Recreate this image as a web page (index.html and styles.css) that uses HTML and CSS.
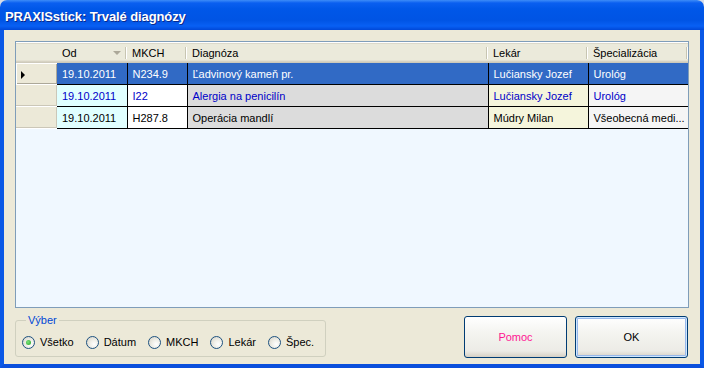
FILE: index.html
```html
<!DOCTYPE html>
<html lang="sk">
<head>
    <meta charset="UTF-8">
    <title>PRAXISstick: Trvalé diagnózy</title>
    <link rel="stylesheet" href="styles.css">
</head>
<body>
    <div class="window">
        <!-- Title bar -->
        <div class="titlebar">
            <span class="title">PRAXISstick: Trvalé diagnózy</span>
        </div>

        <div class="client">
            <!-- Grid with diagnoses -->
            <div class="grid">
                <table class="diag">
                    <colgroup>
                        <col class="w-rowhead">
                        <col class="w-date">
                        <col class="w-code">
                        <col class="w-name">
                        <col class="w-doctor">
                        <col class="w-spec">
                    </colgroup>
                    <thead>
                        <tr>
                            <th class="rowhead"></th>
                            <th>Od<span class="sort"></span></th>
                            <th>MKCH</th>
                            <th>Diagnóza</th>
                            <th>Lekár</th>
                            <th>Špecializácia</th>
                        </tr>
                    </thead>
                    <tbody>
                        <tr class="selected">
                            <td class="rowhead"><span class="current"></span></td>
                            <td class="c-date">19.10.2011</td>
                            <td class="c-code">N234.9</td>
                            <td class="c-name">Ľadvinový kameň pr.</td>
                            <td class="c-doctor">Lučiansky Jozef</td>
                            <td class="c-spec">Urológ</td>
                        </tr>
                        <tr class="allergy">
                            <td class="rowhead"></td>
                            <td class="c-date">19.10.2011</td>
                            <td class="c-code">I22</td>
                            <td class="c-name">Alergia na penicilín</td>
                            <td class="c-doctor">Lučiansky Jozef</td>
                            <td class="c-spec">Urológ</td>
                        </tr>
                        <tr>
                            <td class="rowhead"></td>
                            <td class="c-date">19.10.2011</td>
                            <td class="c-code">H287.8</td>
                            <td class="c-name">Operácia mandlí</td>
                            <td class="c-doctor">Múdry Milan</td>
                            <td class="c-spec">Všeobecná medi...</td>
                        </tr>
                    </tbody>
                </table>
            </div>

            <div class="bottom">
                <!-- Filter selection -->
                <fieldset class="groupbox">
                    <legend>Výber</legend>
                    <label class="option"><span class="radio checked"></span>Všetko</label>
                    <label class="option"><span class="radio"></span>Dátum</label>
                    <label class="option"><span class="radio"></span>MKCH</label>
                    <label class="option"><span class="radio"></span>Lekár</label>
                    <label class="option"><span class="radio"></span>Špec.</label>
                </fieldset>

                <div class="actions">
                    <button class="btn help-btn">Pomoc</button>
                    <button class="btn ok-btn">OK</button>
                </div>
            </div>
        </div>
    </div>
</body>
</html>
```

FILE: styles.css
```css
body {
    margin: 0;
    padding: 0;
    background-color: #d6dce8;
    font-family: "Liberation Sans", Arial, sans-serif;
    font-size: 11px;
}
.window {
    width: 704px;
    height: 368px;
    box-sizing: border-box;
    display: flex;
    flex-direction: column;
    background-color: #ece9d8;
    border-radius: 7px 7px 0 0;
    overflow: hidden;
}
.titlebar {
    flex: none;
    height: 30px;
    box-sizing: border-box;
    padding: 3px 0 0 5px;
    display: flex;
    align-items: center;
    background: linear-gradient(to bottom, #3d8cf8 0, #0a5ff0 3px, #0057e8 9px, #0054e4 20px, #0860f4 26px, #0048d8 30px);
}
.title {
    color: #fff;
    font-weight: bold;
    font-size: 13px;
    letter-spacing: -0.1px;
    text-shadow: 1px 1px #0a2a8c;
}
.client {
    flex: 1;
    display: flex;
    flex-direction: column;
    padding: 11px 11px 0 11px;
    border-left: 4px solid #0a58e6;
    border-right: 4px solid #0a58e6;
    border-bottom: 4px solid #0a4fdc;
}

/* grid */
.grid {
    height: 267px;
    box-sizing: border-box;
    border: 1px solid #7f9db9;
    background-color: #f0f8ff;
    overflow: hidden;
}
.diag {
    border-collapse: collapse;
    table-layout: fixed;
    width: 672px;
}
.w-rowhead { width: 41px; }
.w-date { width: 70px; }
.w-code { width: 60px; }
.w-name { width: 301px; }
.w-doctor { width: 100px; }
.w-spec { width: 100px; }
.diag th {
    position: relative;
    height: 20px;
    padding: 0 0 0 5px;
    text-align: left;
    font-weight: normal;
    color: #000;
    background: linear-gradient(to bottom, #ebeadb 0, #ebeadb 17px, #e2dece 17px, #d6d2c2 18px, #cbc7b8 19px);
    border-top: 1px solid #fff;
    white-space: nowrap;
}
.diag th::after {
    content: "";
    position: absolute;
    right: 1px;
    top: 4px;
    width: 1px;
    height: 12px;
    background-color: #c7c5b2;
    box-shadow: 1px 0 #fff;
}
.diag th.rowhead::after {
    display: none;
}
.sort {
    position: absolute;
    right: 6px;
    top: 8px;
    border-top: 4px solid #aca899;
    border-left: 4px solid transparent;
    border-right: 4px solid transparent;
}
.diag td {
    height: 21px;
    padding: 0 0 0 5px;
    border-right: 1px solid #000;
    border-bottom: 1px solid #000;
    white-space: nowrap;
    overflow: hidden;
}
.diag td.rowhead {
    padding: 0;
    background-color: #ece9d8;
    border-right: none;
    border-bottom: 1px solid #fff;
    box-shadow: inset -1px -1px #cbc7b8;
}
.selected td.rowhead {
    box-shadow: inset 1px 1px #fff, inset -1px -1px #aca899;
}
.current {
    display: inline-block;
    margin-left: 5px;
    vertical-align: middle;
    border-left: 4px solid #000;
    border-top: 4px solid transparent;
    border-bottom: 4px solid transparent;
}
.c-date { background-color: #e0ffff; }
.c-code { background-color: #fff; }
.c-name { background-color: #dcdcdc; }
.c-doctor { background-color: #f5f5dc; }
.c-spec { background-color: #f5f5f5; }
.allergy td {
    color: #0000c8;
}
.selected td:not(.rowhead) {
    background-color: #316ac5;
    color: #fff;
}

/* bottom part */
.bottom {
    display: flex;
    align-items: flex-start;
    margin-top: 6px;
}
.groupbox {
    width: 311px;
    min-width: 0;
    box-sizing: border-box;
    margin: 0;
    padding: 9px 6px 7px 6px;
    border: 1px solid #d0d0bf;
    border-radius: 3px;
    display: flex;
    align-items: center;
}
.groupbox legend {
    padding: 0 2px;
    margin-left: 4px;
    color: #0046d5;
    line-height: 13px;
}
.option {
    display: flex;
    align-items: center;
    margin-right: 12px;
    line-height: 13px;
}
.option:last-child {
    margin-right: 0;
}
.radio {
    width: 13px;
    height: 13px;
    box-sizing: border-box;
    margin-right: 5px;
    border: 1px solid #1c5180;
    border-radius: 50%;
    background: radial-gradient(circle at 65% 65%, #fff 0, #f0efe8 40%, #d3d0c4 100%);
    display: flex;
    align-items: center;
    justify-content: center;
}
.radio.checked::after {
    content: "";
    width: 5px;
    height: 5px;
    border-radius: 50%;
    background: radial-gradient(circle at 40% 40%, #7ce37c 0, #21a121 100%);
}
.actions {
    margin-left: auto;
    margin-top: 2px;
    margin-right: 1px;
    display: flex;
    gap: 8px;
}
.btn {
    height: 42px;
    border: 1px solid #003c74;
    border-radius: 3px;
    background: linear-gradient(to bottom, #fff 0, #f4f4f0 40%, #ecebe6 85%, #d6d0c5 100%);
    font-family: "Liberation Sans", Arial, sans-serif;
    font-size: 11px;
    color: #000;
    cursor: pointer;
}
.help-btn {
    width: 103px;
    color: #ff1493;
}
.ok-btn {
    width: 113px;
    box-shadow: inset 0 0 0 1px #cee7ff, inset 0 0 0 2px #98b8ea;
}
```
